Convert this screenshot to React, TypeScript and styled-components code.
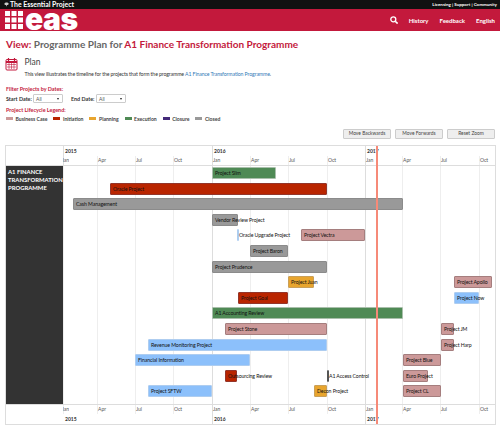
import React from "react";
import styled, { createGlobalStyle } from "styled-components";

const Global = createGlobalStyle`
  html, body { margin: 0; padding: 0; background: #fff; }
  body { font-family: "Lato", "Open Sans", sans-serif; color: #333; width: 500px; height: 431px; overflow: hidden; }
`;

const TopBar = styled.div`
  height: 9px; background: #111; color: #fff; display: flex; align-items: center;
  justify-content: space-between; padding: 0 3px 0 4px; line-height: 9px;
`;
const Brand = styled.div`display: flex; align-items: center; gap: 1px; font-weight: 700; font-size: 6.9px;`;
const Links = styled.div`font-size: 4.5px; font-weight: 700;`;
const RedBand = styled.div`
  height: 22px; background: #c3193c; display: flex; align-items: center; justify-content: space-between;
  padding: 0 5px; color: #fff;
`;
const Logo = styled.div`display: flex; align-items: center; gap: 2px;`;
const LogoWord = styled.div`
  font-family: "Inter", sans-serif; font-weight: 900; font-size: 30px; line-height: 18px; height: 18px; letter-spacing: -0.4px;
  position: relative; top: -1px;
`;
const Nav = styled.nav`display: flex; align-items: center; gap: 11px; font-size: 6px; font-weight: 700;`;
const Main = styled.main`padding: 6px 5px 0 6px;`;
const Title = styled.h1`
  margin: 0; font-size: 10px; line-height: 14px; font-weight: 700; color: #c3193c; white-space: nowrap;
`;
const Muted = styled.span`color: #666;`;
const Section = styled.div`display: flex; align-items: flex-start; gap: 6.5px; margin: 6px 0 0 -1px; height: 21px;`;
const SectionBody = styled.div`display: flex; flex-direction: column;`;
const SectionTitle = styled.h2`margin: 0; font-size: 8.5px; line-height: 10px; font-weight: 400; color: #444;`;
const Desc = styled.p`margin: 3px 0 0; font-size: 5.2px; line-height: 8px; letter-spacing: -0.11px; color: #333; white-space: nowrap;`;
const Link = styled.span`color: #337ab7;`;
const Red = styled.div`color: #c3193c; font-size: 5.4px; font-weight: 700; line-height: 8px;`;
const FilterHead = styled(Red)`margin-top: 7px;`;
const FilterRow = styled.div`display: flex; align-items: center; height: 11px; font-size: 5.4px; font-weight: 700;`;
const FilterLabel = styled.span<{ $w: number }>`width: ${p => p.$w}px; flex: none;`;
const Select = styled.div`
  width: 30px; height: 9px; box-sizing: border-box; border: 1px solid #ccc; border-radius: 1px; font-weight: 400;
  display: flex; align-items: center; justify-content: space-between; padding: 0 3px 0 2px; font-size: 5px; color: #555;
  &::after { content: ""; border: 1.5px solid transparent; border-top: 2px solid #222; border-bottom: 0; }
`;
const LegendHead = styled(Red)`margin-top: 2px;`;
const Legend = styled.div`display: flex; align-items: center; gap: 6px; height: 9px; font-size: 5.1px; font-weight: 700; color: #444;`;
const LegendItem = styled.span`display: flex; align-items: center; gap: 2.5px;`;
const Swatch = styled.i<{ $c: string }>`width: 7px; height: 3.5px; background: ${p => p.$c}; display: block;`;
const Controls = styled.div`display: flex; justify-content: flex-end; gap: 4px; margin-top: 6px;`;
const Btn = styled.button`
  width: 46px; height: 7.5px; padding: 0; border: 1px solid #ccc; border-radius: 1px; background: #eee; color: #444;
  font: 400 4.9px "Lato", sans-serif; box-sizing: content-box; line-height: 7.5px;
`;

const Frame = styled.div`
  position: absolute; left: 5px; top: 145px; width: 491px; height: 280px; box-sizing: border-box; border: 1px solid #ddd;
`;
const Layer = styled.div`position: absolute; inset: 0;`;
const HLine = styled.div<{ $y: number }>`position: absolute; left: 0; right: 0; top: ${p => p.$y}px; height: 1px; background: #ddd;`;
const VLine = styled.div<{ $major?: boolean }>`
  position: absolute; width: 1px; background: ${p => (p.$major ? "#ddd" : "#eee")};
`;
const Year = styled.span`position: absolute; font-size: 5px; font-weight: 700; color: #333; line-height: 7px;`;
const Month = styled.span<{ $clip?: boolean }>`
  position: absolute; font-size: 5px; color: #555; line-height: 7px;
  ${p => p.$clip && "width: 6px; overflow: hidden; direction: rtl;"}
`;
const GroupLabel = styled.div`
  position: absolute; left: 0; top: 20px; width: 57px; height: 238px; background: #333; color: #fff; box-sizing: border-box;
  padding: 2px; font-size: 5.9px; font-weight: 700; line-height: 7.8px;
`;
const Bar = styled.div<{ $c: string; $b: string }>`
  position: absolute; height: 12px; box-sizing: border-box; background: ${p => p.$c};
  border: 1px solid ${p => p.$b}; border-radius: 1px;
`;
const BarText = styled.span`
  position: absolute; height: 12px; line-height: 12px; font-size: 5.2px; letter-spacing: -0.1px; color: #111; white-space: nowrap;
`;
const Today = styled.div`position: absolute; width: 1.5px; top: 0; bottom: 0; background: #f68a78;`;

const colors: Record<string, [string, string]> = {
  g: ["#4f8a55", "#a9bfab"],
  r: ["#b92500", "#93352a"],
  k: ["#999", "#8b8b8b"],
  p: ["#cc9999", "#a57e7e"],
  o: ["#e8a52e", "#c9a05a"],
  b: ["#8cc0fb", "#aecdf0"],
  d: ["#555", "#555"],
};

const rows: [number, number, number, string, string][] = [
  [0, 212, 276, "g", "Project Slim"],
  [1, 110, 327, "r", "Oracle Project"],
  [2, 73, 403, "k", "Cash Management"],
  [3, 212, 238, "k", "Vendor Review Project"],
  [4, 237, 239, "b", "Oracle Upgrade Project"],
  [4, 301, 365, "p", "Project Vectra"],
  [5, 250, 288, "k", "Project Baron"],
  [6, 212, 327, "k", "Project Prudence"],
  [7, 288, 314, "o", "Project Juan"],
  [7, 454, 492, "p", "Project Apollo"],
  [8, 238, 288, "r", "Project Goal"],
  [8, 454, 479, "b", "Project Now"],
  [9, 212, 403, "g", "A1 Accounting Review"],
  [10, 225, 327, "p", "Project Stone"],
  [10, 441, 454, "p", "Project JM"],
  [11, 148, 327, "b", "Revenue Monitoring Project"],
  [11, 441, 454, "p", "Project Harp"],
  [12, 135, 250, "b", "Financial Information"],
  [12, 403, 441, "p", "Project Blue"],
  [13, 225, 237, "r", "Outsourcing Review"],
  [13, 327, 328, "d", "A1 Access Control"],
  [13, 403, 428, "p", "Euro Project"],
  [14, 148, 212, "b", "Project SFTW"],
  [14, 314, 327, "o", "Decon Project"],
  [14, 403, 441, "p", "Project CL"],
];

const months: [number, string, boolean][] = [
  [63, "Jan", false], [97, "Apr", false], [135, "Jul", false], [173, "Oct", false],
  [212, "Jan", true], [250, "Apr", false], [288, "Jul", false], [327, "Oct", false],
  [365, "Jan", true], [402, "Apr", false], [440, "Jul", false], [479, "Oct", false],
];
const years: [number, string][] = [[65, "2015"], [214, "2016"], [367, "2017"]];

const X = 6, Y = 146;

const CalendarIcon = () => (
  <svg width="13" height="14" viewBox="0 0 13 14" fill="none" stroke="#c3193c">
    <rect x="1" y="2.5" width="11" height="10.5" rx="1" fill="#fff" />
    <path d="M1 5h11" strokeWidth="2" />
    <path d="M3.5 1v3M9.5 1v3" strokeWidth="1.2" />
    <path d="M2 7.5h9M2 10h9M4 6v6M6.5 6v6M9 6v6" strokeWidth="0.6" />
  </svg>
);

const GridLogo = () => (
  <svg width="18" height="18" viewBox="0 0 18 18" fill="#fff">
    {[0, 6.5, 13].flatMap(x => [0, 6.5, 13].map(y => <rect key={`${x}-${y}`} x={x} y={y} width="5" height="5" />))}
  </svg>
);

const SearchIcon = () => (
  <svg width="8" height="8" viewBox="0 0 8 8" fill="none" stroke="#fff" strokeWidth="1.3">
    <circle cx="3.3" cy="3.3" r="2.5" />
    <path d="M5.2 5.2L7.6 7.6" strokeWidth="1.6" />
  </svg>
);

const BrainIcon = () => (
  <svg width="5" height="5" viewBox="0 0 5 5" fill="#ccc"><path d="M0.5 1.5C1 .3 4 .2 4.6 1.5 5 3 3.5 3 3 3L2.6 4.7 2 3C1 3 .2 2.6.5 1.5z" /></svg>
);

export default function App() {
  return (
    <>
      <Global />
      <TopBar>
        <Brand><BrainIcon />The Essential Project</Brand>
        <Links>Licensing | Support | Community</Links>
      </TopBar>
      <RedBand>
        <Logo><GridLogo /><LogoWord>eas</LogoWord></Logo>
        <Nav><SearchIcon /><span>History</span><span>Feedback</span><span>English</span></Nav>
      </RedBand>
      <Main>
        <Title>View: <Muted>Programme Plan for</Muted> A1 Finance Transformation Programme</Title>
        <Section>
          <CalendarIcon />
          <SectionBody>
            <SectionTitle>Plan</SectionTitle>
            <Desc>This view illustrates the timeline for the projects that form the programme <Link>A1 Finance Transformation Programme</Link>.</Desc>
          </SectionBody>
        </Section>
        <FilterHead>Filter Projects by Dates:</FilterHead>
        <FilterRow>
          <FilterLabel $w={27}>Start Date:</FilterLabel><Select>All</Select>
          <FilterLabel $w={8} />
          <FilterLabel $w={25}>End Date:</FilterLabel><Select>All</Select>
        </FilterRow>
        <LegendHead>Project Lifecycle Legend:</LegendHead>
        <Legend>
          <LegendItem><Swatch $c="#cc9999" />Business Case</LegendItem>
          <LegendItem><Swatch $c="#b92500" />Initiation</LegendItem>
          <LegendItem><Swatch $c="#e8a52e" />Planning</LegendItem>
          <LegendItem><Swatch $c="#4f8a55" />Execution</LegendItem>
          <LegendItem><Swatch $c="#442a7a" />Closure</LegendItem>
          <LegendItem><Swatch $c="#999" />Closed</LegendItem>
        </Legend>
        <Controls>
          <Btn>Move Backwards</Btn>
          <Btn>Move Forwards</Btn>
          <Btn>Reset Zoom</Btn>
        </Controls>
      </Main>
      <Frame>
        <Layer>
          {months.map(([x, , major], i) => (
            <React.Fragment key={i}>
              <VLine $major={major} style={{ left: x - X, top: major ? 0 : 10, height: major ? 19 : 9 }} />
              <VLine $major={major} style={{ left: x - X, top: 20, height: 238 }} />
              <VLine $major={major} style={{ left: x - X, top: 258, height: major ? 20 : 10 }} />
            </React.Fragment>
          ))}
          <VLine $major style={{ left: 57, top: 0, height: 19 }} />
          <HLine $y={19} />
          <HLine $y={258} />
          {years.map(([x, t]) => (
            <React.Fragment key={t}>
              <Year style={{ left: x - X, top: 2 }}>{t}</Year>
              <Year style={{ left: x - X, top: 270 }}>{t}</Year>
            </React.Fragment>
          ))}
          {months.map(([x, t], i) => (
            <React.Fragment key={i}>
              <Month $clip={i === 0} style={{ left: x - X + (i === 0 ? 0 : 1), top: 11 }}>{t}</Month>
              <Month $clip={i === 0} style={{ left: x - X + (i === 0 ? 0 : 1), top: 260 }}>{t}</Month>
            </React.Fragment>
          ))}
          <GroupLabel>A1 FINANCE<br />TRANSFORMATION<br />PROGRAMME</GroupLabel>
          {rows.map(([r, a, b, c, t]) => {
            const [bg, bd] = colors[c];
            const top = Math.round(167 + r * 15.6) - Y;
            return (
              <React.Fragment key={t}>
                <Bar $c={bg} $b={bd} style={{ left: a - X, top, width: b - a }} />
                <BarText style={{ left: a - X + (b - a < 4 ? 2 : 3), top }}>{t}</BarText>
              </React.Fragment>
            );
          })}
          <Today style={{ left: 376 - X }} />
        </Layer>
      </Frame>
    </>
  );
}
